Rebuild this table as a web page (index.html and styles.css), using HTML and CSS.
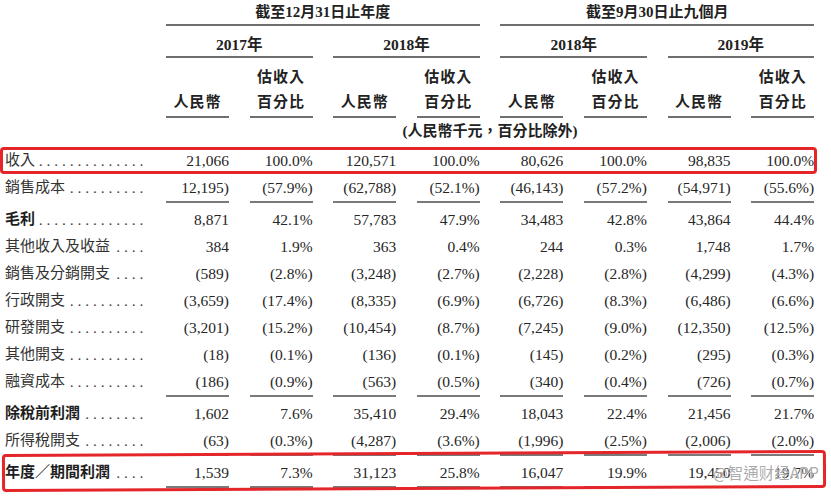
FILE: index.html
```html
<!DOCTYPE html>
<html lang="zh-Hant">
<head>
<meta charset="utf-8">
<title>財務摘要</title>
<link rel="stylesheet" href="styles.css">
</head>
<body>
<div class="page">
  <div class="head">
    <div class="corner"></div>
    <div class="grp grp-a">截至12月31日止年度</div>
    <div class="grp grp-b">截至9月30日止九個月</div>
    <div class="yr yr-1">2017年</div>
    <div class="yr yr-2">2018年</div>
    <div class="yr yr-3">2018年</div>
    <div class="yr yr-4">2019年</div>
    <div class="sub c1">人民幣</div>
    <div class="sub c2"><span>估收入</span><span>百分比</span></div>
    <div class="sub c3">人民幣</div>
    <div class="sub c4"><span>估收入</span><span>百分比</span></div>
    <div class="sub c5">人民幣</div>
    <div class="sub c6"><span>估收入</span><span>百分比</span></div>
    <div class="sub c7">人民幣</div>
    <div class="sub c8"><span>估收入</span><span>百分比</span></div>
    <div class="note">(人民幣千元，百分比除外)</div>
  </div>

  <div class="row">
    <div class="lbl"><span>收入</span><span class="dots">. . . . . . . . . . . . . .</span></div>
    <div class="n">21,066</div><div class="n">100.0%</div><div class="n">120,571</div><div class="n">100.0%</div>
    <div class="n">80,626</div><div class="n">100.0%</div><div class="n">98,835</div><div class="n">100.0%</div>
  </div>
  <div class="row ul">
    <div class="lbl"><span>銷售成本</span><span class="dots">. . . . . . . . . .</span></div>
    <div class="n">12,195)</div><div class="n">(57.9%)</div><div class="n">(62,788)</div><div class="n">(52.1%)</div>
    <div class="n">(46,143)</div><div class="n">(57.2%)</div><div class="n">(54,971)</div><div class="n">(55.6%)</div>
  </div>
  <div class="row after-ul">
    <div class="lbl bold"><span>毛利</span><span class="dots">. . . . . . . . . . . . . .</span></div>
    <div class="n">8,871</div><div class="n">42.1%</div><div class="n">57,783</div><div class="n">47.9%</div>
    <div class="n">34,483</div><div class="n">42.8%</div><div class="n">43,864</div><div class="n">44.4%</div>
  </div>
  <div class="row">
    <div class="lbl"><span>其他收入及收益</span><span class="dots">. . . .</span></div>
    <div class="n">384</div><div class="n">1.9%</div><div class="n">363</div><div class="n">0.4%</div>
    <div class="n">244</div><div class="n">0.3%</div><div class="n">1,748</div><div class="n">1.7%</div>
  </div>
  <div class="row">
    <div class="lbl"><span>銷售及分銷開支</span><span class="dots">. . . .</span></div>
    <div class="n">(589)</div><div class="n">(2.8%)</div><div class="n">(3,248)</div><div class="n">(2.7%)</div>
    <div class="n">(2,228)</div><div class="n">(2.8%)</div><div class="n">(4,299)</div><div class="n">(4.3%)</div>
  </div>
  <div class="row">
    <div class="lbl"><span>行政開支</span><span class="dots">. . . . . . . . . .</span></div>
    <div class="n">(3,659)</div><div class="n">(17.4%)</div><div class="n">(8,335)</div><div class="n">(6.9%)</div>
    <div class="n">(6,726)</div><div class="n">(8.3%)</div><div class="n">(6,486)</div><div class="n">(6.6%)</div>
  </div>
  <div class="row">
    <div class="lbl"><span>研發開支</span><span class="dots">. . . . . . . . . .</span></div>
    <div class="n">(3,201)</div><div class="n">(15.2%)</div><div class="n">(10,454)</div><div class="n">(8.7%)</div>
    <div class="n">(7,245)</div><div class="n">(9.0%)</div><div class="n">(12,350)</div><div class="n">(12.5%)</div>
  </div>
  <div class="row">
    <div class="lbl"><span>其他開支</span><span class="dots">. . . . . . . . . .</span></div>
    <div class="n">(18)</div><div class="n">(0.1%)</div><div class="n">(136)</div><div class="n">(0.1%)</div>
    <div class="n">(145)</div><div class="n">(0.2%)</div><div class="n">(295)</div><div class="n">(0.3%)</div>
  </div>
  <div class="row ul">
    <div class="lbl"><span>融資成本</span><span class="dots">. . . . . . . . . .</span></div>
    <div class="n">(186)</div><div class="n">(0.9%)</div><div class="n">(563)</div><div class="n">(0.5%)</div>
    <div class="n">(340)</div><div class="n">(0.4%)</div><div class="n">(726)</div><div class="n">(0.7%)</div>
  </div>
  <div class="row after-ul">
    <div class="lbl bold"><span>除稅前利潤</span><span class="dots">. . . . . . . .</span></div>
    <div class="n">1,602</div><div class="n">7.6%</div><div class="n">35,410</div><div class="n">29.4%</div>
    <div class="n">18,043</div><div class="n">22.4%</div><div class="n">21,456</div><div class="n">21.7%</div>
  </div>
  <div class="row ul">
    <div class="lbl"><span>所得稅開支</span><span class="dots">. . . . . . . .</span></div>
    <div class="n">(63)</div><div class="n">(0.3%)</div><div class="n">(4,287)</div><div class="n">(3.6%)</div>
    <div class="n">(1,996)</div><div class="n">(2.5%)</div><div class="n">(2,006)</div><div class="n">(2.0%)</div>
  </div>
  <div class="row after-ul ul">
    <div class="lbl bold"><span>年度／期間利潤</span><span class="dots">. . . .</span></div>
    <div class="n">1,539</div><div class="n">7.3%</div><div class="n">31,123</div><div class="n">25.8%</div>
    <div class="n">16,047</div><div class="n">19.9%</div><div class="n">19,450</div><div class="n">19.7%</div>
  </div>

  <div class="mark mark-1"></div>
  <div class="mark mark-2"></div>
  <div class="watermark">@智通财经APP</div>
</div>
</body>
</html>
```

FILE: styles.css
```css
* { box-sizing: border-box; }
html, body { margin: 0; padding: 0; background: #fff; }
body {
  font-family: "Liberation Serif", "Noto Sans CJK TC", serif;
  color: #262626;
  width: 831px;
  height: 497px;
  overflow: hidden;
}
.page { position: relative; width: 831px; height: 497px; }

.head, .row {
  display: grid;
  grid-template-columns: 145.4px repeat(8, 63px);
  column-gap: 20.6px;
}
.head { font-weight: bold; font-size: 15px; color: #222; padding-bottom: 5px; }
.corner { grid-column: 1; grid-row: 1 / span 4; }

.grp {
  grid-row: 1;
  height: 26px;
  line-height: 24px;
  text-align: center;
  border-bottom: 2px solid #6f6f6f;
}
.grp-a { grid-column: 2 / span 4; }
.grp-b { grid-column: 6 / span 4; }

.yr {
  grid-row: 2;
  padding-top: 8px;
  line-height: 22px;
  text-align: center;
  border-bottom: 2px solid #6f6f6f;
  font-size: 15.5px;
}
.yr-1 { grid-column: 2 / span 2; }
.yr-2 { grid-column: 4 / span 2; }
.yr-3 { grid-column: 6 / span 2; }
.yr-4 { grid-column: 8 / span 2; }

.sub {
  grid-row: 3;
  display: flex;
  flex-direction: column;
  justify-content: flex-end;
  align-items: center;
  padding: 7px 0 1px;
  line-height: 25px;
  min-height: 60px;
  border-bottom: 2px solid #6f6f6f;
  letter-spacing: 1px;
}
.c1 { grid-column: 2; } .c2 { grid-column: 3; } .c3 { grid-column: 4; } .c4 { grid-column: 5; }
.c5 { grid-column: 6; } .c6 { grid-column: 7; } .c7 { grid-column: 8; } .c8 { grid-column: 9; }

.note {
  grid-row: 4;
  grid-column: 2 / span 8;
  text-align: center;
  padding-top: 2px;
  line-height: 22px;
}

.row { height: 27px; font-size: 15.5px; }
.row.after-ul { margin-top: 5px; }
.row.ul .n { border-bottom: 2px solid #7a7a7a; }
.n { text-align: right; line-height: 27px; white-space: nowrap; }

.lbl {
  display: flex;
  justify-content: space-between;
  padding: 0 2px 0 5px;
  line-height: 27px;
  font-size: 15px;
  color: #333;
  white-space: nowrap;
}
.lbl.bold { font-weight: bold; color: #1e1e1e; }
.dots {
  font-family: "Liberation Serif", serif;
  font-size: 15.5px;
  font-weight: normal;
  letter-spacing: 0;
  color: #444;
}

.mark {
  position: absolute;
  border: 3px solid #e4262a;
  border-radius: 4px;
  pointer-events: none;
}
.mark-1 { left: 0; top: 147px; width: 817px; height: 27px; }
.mark-2 { left: 2px; top: 452px; width: 824px; height: 38px; transform: rotate(-0.28deg); }

.watermark {
  position: absolute;
  left: 713px;
  top: 462px;
  font-family: "Noto Sans CJK SC", "Noto Sans", sans-serif;
  font-size: 15.5px;
  line-height: 20px;
  color: rgba(150, 150, 150, 0.8);
  text-shadow: 0 0 1px #fff;
  white-space: nowrap;
}
```
